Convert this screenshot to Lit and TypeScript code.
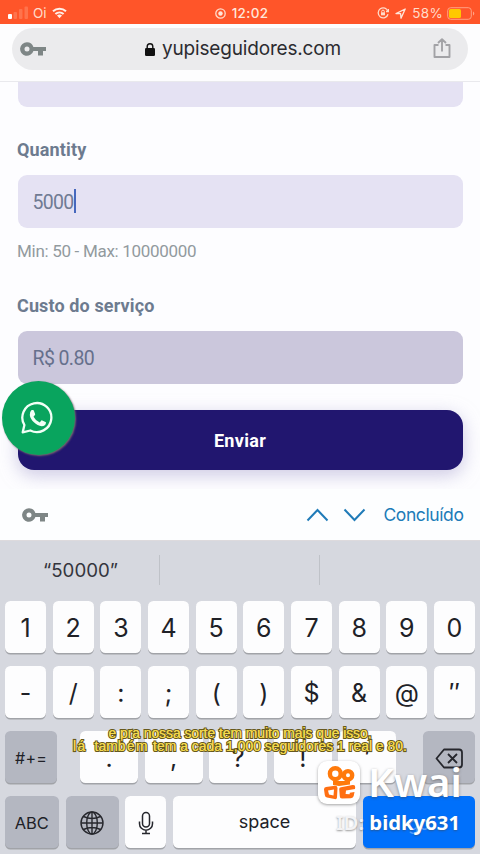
import { LitElement, html, svg, css } from "lit";
import { customElement } from "lit/decorators.js";

const keyIcon = html`<svg class="key-icon" viewBox="0 0 26 16" width="26" height="16">
  <path fill-rule="evenodd" d="M7 1.200a6.800 6.800 0 1 0 6.400 8.800H18v4.600h5V10h3V6H13.400A6.800 6.800 0 0 0 7 1.200Zm0 4.300a2.500 2.500 0 1 1 0 5 2.500 2.500 0 0 1 0-5Z" fill="#7e8686"/>
</svg>`;

@customElement("status-bar")
class StatusBar extends LitElement {
  static styles = css`
    :host { display: grid; grid-template-columns: 1fr auto 1fr; align-items: center; height: 24px; box-sizing: border-box; padding: 2px 5px 0 8px; background: #ff5529; color: #ffdccb; font: 500 13.500px/20px Inter, sans-serif; }
    div { display: flex; align-items: center; height: 20px; }
    svg { display: block; flex: none; }
    .left { gap: 5px; font-weight: 400; font-size: 13.500px; }
    .time { gap: 6px; color: #ffe6da; letter-spacing: 0.3px; }
    .right { justify-content: flex-end; gap: 6px; font-weight: 400; }
    .percent { margin-right: -2px; letter-spacing: 0.3px; }
  `;
  render() {
    return html`
      <div class="left">
        <svg width="20" height="14" viewBox="0 0 20 14"><rect y="8" width="4" height="5" rx="1" fill="#fff"/><g fill="#ff734c"><rect x="5.500" y="6" width="3.500" height="7" rx="1"/><rect x="11" y="3" width="3.500" height="10" rx="1"/><rect x="16.500" y="0.500" width="3.500" height="12.500" rx="1"/></g></svg>
        <span>Oi</span>
        <svg width="15" height="12" viewBox="0 0 15 12"><g fill="none" stroke="#fff0e8" stroke-width="2"><path d="M1 4.300a9.500 9.500 0 0 1 13 0M3.400 7a6 6 0 0 1 8.200 0"/></g><path d="M5 8.600a3.600 3.600 0 0 1 5 0L7.500 11.300Z" fill="#fff0e8"/></svg>
      </div>
      <div class="time">
        <svg width="11" height="11" viewBox="0 0 11 11"><circle cx="5.500" cy="5.500" r="4.700" fill="none" stroke="#ffdccb" stroke-width="1.300"/><circle cx="5.500" cy="5.500" r="2.200" fill="#ffe6da"/></svg>
        <span>12:02</span>
      </div>
      <div class="right">
        <svg width="12" height="12" viewBox="0 0 12 12" fill="none" stroke="#ffdccb" stroke-width="1.300"><path d="M11 7.200A5 5 0 1 1 11 4.500M9 4.500h2.600V2"/><rect x="4" y="5.300" width="4" height="3" fill="#ffdccb" stroke="none"/><path d="M4.700 5.500V4.400a1.300 1.300 0 0 1 2.600 0v1.100" stroke-width="1"/></svg>
        <svg width="11" height="11" viewBox="0 0 11 11"><path d="M1 5.600 10.200 1 6 10.200 5.600 5.600Z" fill="none" stroke="#ffe6da" stroke-width="1.300" stroke-linejoin="round"/></svg>
        <span class="percent">58%</span>
        <svg width="28" height="13" viewBox="0 0 28 13"><rect x="0.700" y="0.700" width="23.600" height="11.600" rx="3" fill="none" stroke="#ffa184"/><rect x="2" y="2" width="12" height="9" rx="1.500" fill="#ffc800"/><path d="M26 4.500v4a2.200 2.200 0 0 0 0-4" fill="#ffa184"/></svg>
      </div>`;
  }
}

@customElement("address-bar")
class AddressBar extends LitElement {
  static styles = css`
    :host { display: block; height: 58px; box-sizing: border-box; padding: 4px 12px 0; background: #fdfdfe; border-bottom: 1px solid #e9e9ed; }
    .pill { display: grid; grid-template-columns: 1fr auto 1fr; align-items: center; height: 42px; border-radius: 21px; background: #ebebed; padding: 0 17px 0 8px; }
    .url { display: flex; align-items: center; gap: 7px; color: #2b2b30; font: 400 19px/42px Inter, sans-serif; letter-spacing: -0.17px; padding-left: 15px; }
    .share { justify-self: end; }
    svg { display: block; }
  `;
  render() {
    return html`<div class="pill">
      ${keyIcon}
      <div class="url">
        <svg width="10" height="13" viewBox="0 0 10 13"><rect y="5" width="10" height="8" rx="1.300" fill="#111"/><path d="M2.200 6V3.500a2.800 2.800 0 0 1 5.600 0V6" fill="none" stroke="#111" stroke-width="1.400"/></svg>
        <span>yupiseguidores.com</span>
      </div>
      <svg class="share" width="18" height="22" viewBox="0 0 18 22" fill="none" stroke="#a2a2a6" stroke-width="1.900" stroke-linejoin="round"><path d="M5.500 7H1.500v12h15V7h-4M9 13.500V1.500M5 5 9 1.200 13 5"/></svg>
    </div>`;
  }
}

@customElement("order-form")
class OrderForm extends LitElement {
  static styles = css`
    :host { display: block; position: relative; height: 407px; overflow: hidden; box-sizing: border-box; padding: 0 17.500px; background: #fdfdff; font-family: Roboto, sans-serif; color: #6d7b8f; }
    .field { height: 53px; box-sizing: border-box; border-radius: 9px; background: #e5e2f3; display: flex; align-items: center; padding: 2px 0 0 15px; font-size: 19.500px; color: #707b93; }
    .previous { height: 25px; border-radius: 0 0 9px 9px; }
    .label { height: 24px; line-height: 24px; font-weight: 700; font-size: 18px; text-indent: -0.5px; }
    .quantity { margin: 31px 0 13px; letter-spacing: 0.150px; }
    .cost { margin: 31px 0 13px; letter-spacing: 0.12px; }
    .hint { height: 24px; line-height: 24px; margin-top: 11px; font-size: 17px; color: #929a9e; letter-spacing: -0.3px; text-indent: -0.5px; }
    .value { display: inline-block; letter-spacing: -0.7px; }
    .caret { width: 2px; height: 24px; background: #4668bd; margin-top: -3px; }
    .readonly { background: #cbc7dc; color: #66708c; }
    .readonly .value { letter-spacing: -0.6px; }
    .send { display: flex; align-items: center; justify-content: center; width: 100%; height: 60px; margin-top: 26px; border: 0; border-radius: 16px; background: #21166f; color: #fff; font: 700 18px/60px Roboto, sans-serif; letter-spacing: 0.3px; padding: 2px 0 0; box-shadow: 0 5px 18px #aca5d199; }
    .whatsapp { position: absolute; left: 2px; top: 299px; width: 73px; height: 74px; border-radius: 50%; background: #09a45e; display: flex; align-items: center; justify-content: center; box-shadow: 1px 1px 2px #77686f; }
    .whatsapp svg { margin: -2px 0 0 -2px; }
  `;
  render() {
    return html`
      <div class="field previous"></div>
      <div class="label quantity">Quantity</div>
      <div class="field"><span class="value">5000</span><span class="caret"></span></div>
      <div class="hint">Min: 50 - Max: 10000000</div>
      <div class="label cost">Custo do serviço</div>
      <div class="field readonly"><span class="value">R$ 0.80</span></div>
      <button class="send">Enviar</button>
      <div class="whatsapp"><svg width="33" height="33" viewBox="0 0 33 33"><path d="M1.700 31.300 3.400 24A14.500 14.500 0 1 1 9.300 29.500Z" fill="none" stroke="#f1fff6" stroke-width="2.300" stroke-linejoin="round"/><path d="M10.600 9h1.400q.6 0 .8.600l1.300 3.400q.2.600-.2 1l-1.400 1.800q2.200 4.200 6.300 5.700l1.500-1.900q.4-.5 1-.2l3.200 1.600q.5.300.5.800-.3 3.200-4.300 3.500c-5.200-.3-11.500-6.200-11.900-11.200q-.1-3.600 1.800-5.100Z" fill="#f1fff6"/></svg></div>`;
  }
}

@customElement("form-toolbar")
class FormToolbar extends LitElement {
  static styles = css`
    :host { display: flex; align-items: center; height: 51px; box-sizing: border-box; padding: 0 16.500px 0 22px; background: #fdfeff; color: #207bb8; font: 400 17.500px/51px Inter, sans-serif; letter-spacing: -0.4px; }
    .arrows { display: block; margin-left: auto; margin-right: 17px; }
  `;
  render() {
    return html`${keyIcon}
      <svg class="arrows" width="60" height="14" viewBox="0 0 60 14" fill="none" stroke="#207bb8" stroke-width="2"><path d="M1.500 12.500 11.500 2l10 10.500M38.500 1.500l10 10.500 10-10.500"/></svg>
      <span>Concluído</span>`;
  }
}

const globe = svg`<circle cx="12" cy="12" r="11"/><ellipse cx="12" cy="12" rx="5.300" ry="11"/><path d="M12 1v22M1 12h22M3.500 5.500q8.500 4 17 0M3.500 18.500q8.500-4 17 0"/>`;

@customElement("soft-keyboard")
class SoftKeyboard extends LitElement {
  static styles = css`
    :host { display: block; height: 314px; box-sizing: border-box; background: #d6d8df; border-top: 1px solid #dddadd; font-family: Inter, sans-serif; color: #202127; }
    .suggestions { display: grid; grid-template-columns: repeat(3, 1fr); height: 60px; align-items: center; }
    .suggestions span { height: 30px; line-height: 31px; text-align: center; font-size: 18.700px; border-right: 1px solid #bfc2c8; margin-top: -2px; padding-left: 2px; color: #34353d; box-sizing: border-box; }
    .suggestions span:last-child { border: 0; }
    .row { display: flex; gap: 6.500px; padding: 0 5px; margin-bottom: 13px; }
    .keycap { flex: 1; min-width: 0; height: 52px; box-sizing: border-box; border-radius: 5.500px; background: #fdfdfe; box-shadow: 0 1.500px 0 #a1a3a8; display: flex; align-items: center; justify-content: center; font-size: 25px; padding-top: 2px; }
    .gray { background: #b4b7c1; font-size: 16.500px; }
    .side { flex: 0 0 52px; }
    .third .side:first-child { margin-right: 16.500px; font-size: 16px; letter-spacing: 0.2px; }
    .third .side:last-child { margin-left: 20px; }
    .bottom { gap: 7px; }
    .function { flex: 0 0 53.500px; }
    .mic { flex: 0 0 41px; margin-left: -1px; }
    .space { flex: 1; font-size: 18px; padding: 0 0 1px; }
    .go { flex: 0 0 112px; background: #0070fb; color: #57a0ff; font-size: 18px; }
  `;
  render() {
    return html`
      <div class="suggestions"><span>“50000”</span><span></span><span></span></div>
      ${["1234567890", "-/:;()$&@″"].map(row => html`<div class="row">${[...row].map(key => html`<div class="keycap">${key}</div>`)}</div>`)}
      <div class="row third">
        <div class="keycap gray side">#+=</div>
        ${[".", ",", "?", "!", "′"].map(key => html`<div class="keycap">${key}</div>`)}
        <div class="keycap gray side"><svg width="28" height="21" viewBox="0 0 28 21" fill="none" stroke="#26272d" stroke-width="1.800" stroke-linejoin="round"><path d="M9 1.500h15q3 0 3 3v12q0 3-3 3H9L1.500 10.500ZM13 6l9 9M22 6l-9 9"/></svg></div>
      </div>
      <div class="row bottom">
        <div class="keycap gray function">ABC</div>
        <div class="keycap gray function"><svg width="24" height="24" viewBox="0 0 24 24" fill="none" stroke="#26272d" stroke-width="1.400">${globe}</svg></div>
        <div class="keycap mic"><svg width="16" height="24" viewBox="0 0 16 24" fill="none" stroke="#26272d" stroke-width="1.500"><rect x="4.500" y="1.500" width="7" height="14.500" rx="3.500"/><path d="M1.500 10.500v2.200a6.500 6.500 0 0 0 13 0v-2.200M8 19v3.500M4 22.500h8"/></svg></div>
        <div class="keycap space">space</div>
        <div class="keycap go">go</div>
      </div>`;
  }
}

@customElement("video-overlay")
class VideoOverlay extends LitElement {
  static styles = css`
    :host { position: absolute; inset: 0; pointer-events: none; font-family: "Liberation Sans", sans-serif; }
    .caption { position: absolute; left: 0; top: 727px; width: 480px; text-align: center; white-space: pre; color: #f3d84e; font-size: 13.800px; line-height: 13px; -webkit-text-stroke: 2.200px #66581b; paint-order: stroke fill; text-shadow: 0 0 0.5px #f3d84e; }
    .caption span { display: block; }
    .logo { position: absolute; left: 318px; top: 761px; width: 42px; height: 43px; border-radius: 9px; background: #fff; box-shadow: 0 1px 3px #5558; display: grid; place-items: center; }
    .brand { position: absolute; left: 368px; top: 760px; color: #fff; font: 600 40px/44px "Noto Sans", sans-serif; text-shadow: 0 1px 3px #4449; }
    .id { position: absolute; right: 20px; top: 808px; color: #fff; font: 700 20.300px/28px "Noto Sans", sans-serif; white-space: pre; text-shadow: 0 1px 2px #4448; }
    .prefix { color: #f3f3f5; font-weight: 600; }
    .first { letter-spacing: 0; }
    .second { letter-spacing: 0.08px; }
    .caption .loose { display: inline; letter-spacing: 1.500px; }
  `;
  render() {
    return html`
      <div class="caption"><span class="first">e pra nossa sorte tem muito mais que isso,</span><span class="second"><span class="loose">lá</span>  tam<span class="loose">bém</span> tem a cada 1,000 seguidores 1 real e 80.</span></div>
      <div class="logo"><svg width="34" height="37" viewBox="0 0 34 37"><g fill="none" stroke="#ff7a0b" stroke-width="4.400"><circle cx="13.300" cy="9.700" r="5.400"/><circle cx="26" cy="11.300" r="4.200"/></g><path fill="#ff7a0b" d="M11 17h17v3.500l-11 1.500-6-1Z"/><path fill-rule="evenodd" d="M4 23l9-1.300q2.500 0 2.500 2.300l-.5 9.500q-.2 2-2.300 1.600L5 33.500q-2-.4-2.200-2.500L2 25.500Q1.900 23.300 4 23ZM6 26.500l1 4 4.500 1 .5-6Z" fill="#ff6f12"/><path d="M19 23.200 30.500 21q3-.4 2.700 2.300l-.2 1.700-9 1.500-.4 3.500 4 .2.200-1.400 4.700-.8-.8 4q-.5 2-2.800 2.200l-8.900.3q-2.300 0-2.200-2.200L17.200 25q0-1.500 1.800-1.800Z" fill="#ff6f12"/></svg></div>
      <div class="brand">Kwai</div>
      <div class="id"><span class="prefix">ID: </span>bidky631</div>`;
  }
}

@customElement("app-root")
class AppRoot extends LitElement {
  static styles = css`
    :host { display: block; position: relative; width: 480px; height: 854px; overflow: hidden; background: #d6d8df; }
  `;
  render() {
    return html`<status-bar></status-bar><address-bar></address-bar><order-form></order-form><form-toolbar></form-toolbar><soft-keyboard></soft-keyboard><video-overlay></video-overlay>`;
  }
}
